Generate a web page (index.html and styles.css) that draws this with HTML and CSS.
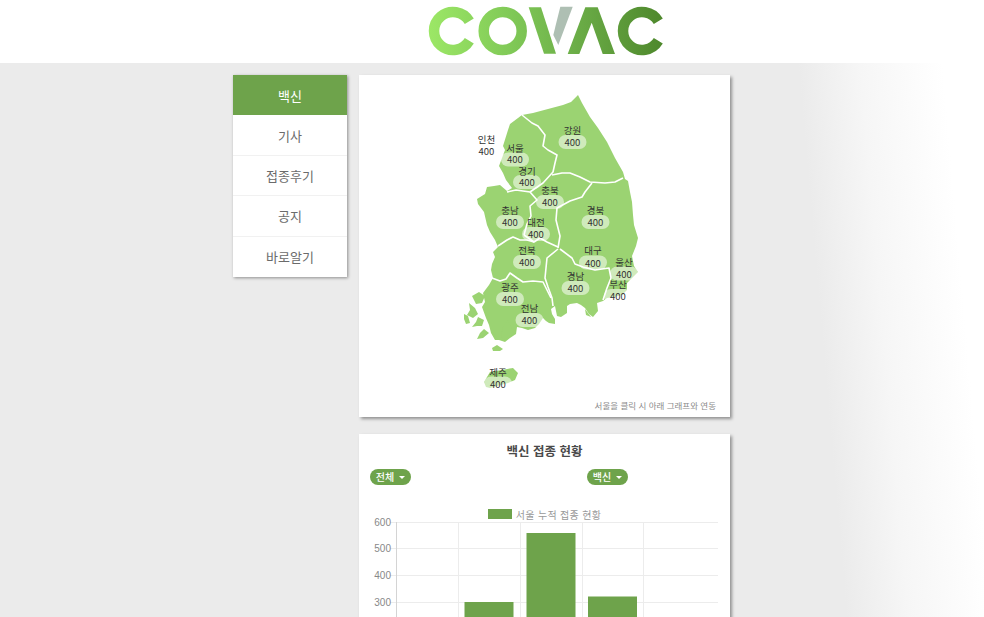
FILE: index.html
```html
<!DOCTYPE html>
<html lang="ko">
<head>
<meta charset="utf-8">
<title>COVAC</title>
<link rel="stylesheet" href="styles.css">
</head>
<body>
<header class="top">
  <div class="logo-col">
    <svg class="logo" viewBox="425 3 238 54" role="img" aria-label="COVAC">
      <defs>
        <linearGradient id="lg" gradientUnits="userSpaceOnUse" x1="428" y1="0" x2="662" y2="0">
          <stop offset="0" stop-color="#9ce766"/>
          <stop offset=".35" stop-color="#80c957"/>
          <stop offset=".62" stop-color="#6cae48"/>
          <stop offset="1" stop-color="#4e882c"/>
        </linearGradient>
      </defs>
      <path class="logo-stroke" d="M468.3 21.2A19 19 0 1 0 468.3 40.8"/>
      <circle class="logo-stroke" cx="501.7" cy="31" r="19"/>
      <polygon class="logo-fill" points="527.7,7.3 540,7.3 555,53.8 543,53.8"/>
      <polygon class="logo-grey" points="559.3,6.7 571.7,6.7 557.3,45 552.3,35"/>
      <polygon class="logo-fill" points="566.7,54 584.3,7.3 596.7,7.3 614,54 601.7,54 590.7,22.7 578.3,54"/>
      <path class="logo-stroke" d="M657.3 21.2A19 19 0 1 0 657.3 40.8"/>
    </svg>
  </div>
</header>
<main class="main">
  <nav class="side">
    <a class="side-item active">백신</a>
    <a class="side-item">기사</a>
    <a class="side-item">접종후기</a>
    <a class="side-item">공지</a>
    <a class="side-item">바로알기</a>
  </nav>
  <div class="content">
    <section class="card map-card">
      <svg class="map" viewBox="359 75 371 342">
        <path class="land" d="M578 95L582 103 590 117 598 128 607 142 615 158 623 172 625 179 628 181 630 192 632 202 633 215 634 225 638 238 636 246 632 256 634 266 638 272 632 278 627 283 627 290 622 295 614 297 607 298 603 301 597 303 598 311 593 317 589 314 585 308 581 305 577 303 570 304 567 306 567 313 561 317 557 316 555 306 551 309 552 314 555 319 555 324 549 323 546 321 543 318 539 324 535 328 528 330 522 328 517 327 516 334 510 338 505 342 499 340 495 340 491 333 489 325 486 318 482 307 485 302 483 293 489 285 493 278 491 270 492 264 495 257 493 252 498 247 495 240 490 232 487 225 484 212 478 204 477 199 485 194 487 187 494 186 500 185 507 191 512 188 506 180 503 173 499 166 502 158 505 150 503 146 508 130 510 124 522 115 533 113 548 109 563 105 571 102Z"/>
        <path class="land" d="M472 296L479 292 485 296 482 303 476 304ZM469 303L475 308 478 314 473 318 467 315 470 310ZM464 314L468 316 470 323 466 324 464 319ZM478 317L484 320 482 326 477 326 472 327 476 322ZM484 329L489 333 483 338 477 339 480 333ZM492 348L497 345 503 349 500 351 493 351ZM508 320L514 334 505 341 501 336 503 327ZM484 382L490 372 513 368 518 373 515 380 508 383 490 388 486 387ZM585 309L591 317 586 315Z"/>
        <polyline class="border" points="522,115 532,123 538,126 545,135 543,146 548,150 557,155 555,163 553,172 543,183 530,192"/>
        <polyline class="border" points="552,175 562,173 570,173 580,177 590,182 605,183 615,182 623,178"/>
        <polyline class="border" points="592,183 585,192 582,197 570,201 557,208 556,220 558,228 560,236 558,248"/>
        <polyline class="border" points="507,192 516,190 530,192 537,200 530,206 531,216 527,224 524,235"/>
        <polyline class="border" points="524,235 534,242 540,238 547,242 558,247"/>
        <polyline class="border" points="498,246 507,240 513,237 520,240 527,240 534,242"/>
        <polyline class="border" points="558,249 547,258 546,268 545,278 548,287 552,298 553,306"/>
        <polyline class="border" points="560,249 572,258 575,264 583,267 595,270 609,268 611,278 607,288 603,300"/>
        <polyline class="border" points="492,278 500,281 506,279 510,273 517,278 523,282 533,281 543,282 547,290 551,298"/>
        <g class="pills">
          <rect x="472.500" y="143.500" width="28" height="14" rx="7"/>
          <rect x="501" y="152.500" width="28" height="14" rx="7"/>
          <rect x="513" y="175" width="28" height="14" rx="7"/>
          <rect x="558.500" y="135" width="28" height="14" rx="7"/>
          <rect x="536" y="195" width="28" height="14" rx="7"/>
          <rect x="496" y="215" width="28" height="14" rx="7"/>
          <rect x="522" y="227" width="28" height="14" rx="7"/>
          <rect x="581.500" y="215" width="28" height="14" rx="7"/>
          <rect x="513" y="255" width="28" height="14" rx="7"/>
          <rect x="579" y="255.500" width="28" height="14" rx="7"/>
          <rect x="610" y="266.500" width="28" height="14" rx="7"/>
          <rect x="561.500" y="281" width="28" height="14" rx="7"/>
          <rect x="604" y="289" width="28" height="14" rx="7"/>
          <rect x="496" y="292" width="28" height="14" rx="7"/>
          <rect x="515.500" y="313" width="28" height="14" rx="7"/>
          <rect x="484" y="376.500" width="28" height="14" rx="7"/>
        </g>
        <g class="labels">
          <text x="486.500" y="143">인천</text><text x="486.500" y="155">400</text>
          <text x="515" y="151.500">서울</text><text x="515" y="163">400</text>
          <text x="527" y="174.500">경기</text><text x="527" y="186">400</text>
          <text x="572.500" y="134">강원</text><text x="572.500" y="146">400</text>
          <text x="550" y="194">충북</text><text x="550" y="206">400</text>
          <text x="510" y="214">충남</text><text x="510" y="226">400</text>
          <text x="536" y="225.500">대전</text><text x="536" y="238">400</text>
          <text x="595.500" y="214">경북</text><text x="595.500" y="226">400</text>
          <text x="527" y="254">전북</text><text x="527" y="266">400</text>
          <text x="593" y="253.500">대구</text><text x="593" y="267">400</text>
          <text x="624" y="265.500">울산</text><text x="624" y="278">400</text>
          <text x="575.500" y="280">경남</text><text x="575.500" y="292">400</text>
          <text x="618" y="288">부산</text><text x="618" y="300">400</text>
          <text x="510" y="291">광주</text><text x="510" y="303">400</text>
          <text x="529.500" y="312">전남</text><text x="529.500" y="324">400</text>
          <text x="498" y="375.500">제주</text><text x="498" y="388">400</text>
        </g>
      </svg>
      <p class="map-note">서울을 클릭 시 아래 그래프와 연동</p>
    </section>
    <section class="card chart-card">
      <h2 class="chart-title">백신 접종 현황</h2>
      <div class="filters">
        <button class="pill">전체<span class="caret"></span></button>
        <button class="pill">백신<span class="caret"></span></button>
      </div>
      <div class="legend"><span class="swatch"></span><span class="legend-text">서울 누적 접종 현황</span></div>
      <svg class="chart" viewBox="359 518 371 240">
        <g class="grid">
          <line x1="390" y1="523.500" x2="718" y2="523.500"/>
          <line x1="390" y1="549.500" x2="718" y2="549.500"/>
          <line x1="390" y1="576.500" x2="718" y2="576.500"/>
          <line x1="390" y1="603.500" x2="718" y2="603.500"/>
          <line x1="390" y1="629.500" x2="718" y2="629.500"/>
          <line x1="390" y1="656.500" x2="718" y2="656.500"/>
          <line x1="458.500" y1="523" x2="458.500" y2="690"/>
          <line x1="520.500" y1="523" x2="520.500" y2="690"/>
          <line x1="582.500" y1="523" x2="582.500" y2="690"/>
          <line x1="643.500" y1="523" x2="643.500" y2="690"/>
          <line class="axis" x1="396.500" y1="523" x2="396.500" y2="690"/>
        </g>
        <g class="bars">
          <rect x="464.500" y="603" width="49" height="87"/>
          <rect x="526.500" y="534" width="49" height="156"/>
          <rect x="588" y="597.500" width="49" height="92.500"/>
        </g>
        <g class="ticks">
          <text x="391" y="527">600</text>
          <text x="391" y="553">500</text>
          <text x="391" y="580">400</text>
          <text x="391" y="607">300</text>
          <text x="391" y="633">200</text>
          <text x="391" y="660">100</text>
        </g>
      </svg>
    </section>
  </div>
</main>
</body>
</html>
```
FILE: styles.css
```css
* { box-sizing: border-box; }
html, body { height: 100%; margin: 0; overflow: hidden; }
body {
  display: flex;
  flex-direction: column;
  font-family: "Noto Sans CJK KR", "Noto Sans", sans-serif;
  background: #fff;
}
.top { height: 63px; flex: none; background: #fff; padding-left: 359px; }
.logo-col { width: 371px; display: flex; justify-content: center; }
.logo { width: 238px; height: 54px; margin-top: 3px; display: block; }
.logo-stroke { fill: none; stroke: url(#lg); stroke-width: 10.5; }
.logo-fill { fill: url(#lg); }
.logo-grey { fill: #aebfb3; }

.main {
  flex: 1;
  min-height: 0;
  display: flex;
  align-items: flex-start;
  gap: 12px;
  padding: 12px 0 0 233px;
  background: linear-gradient(85deg, #ebebeb 0, #ebebeb 82%, #f6f6f6 88%, #fff 96%);
}
.side {
  width: 114px;
  flex: none;
  background: #fff;
  box-shadow: 1px 1px 3px rgba(0, 0, 0, .4);
  display: flex;
  flex-direction: column;
}
.side-item {
  height: 40.4px;
  display: flex;
  align-items: center;
  justify-content: center;
  font-size: 13px;
  color: #6b6b6b;
  border-bottom: 1px solid #f1f1f1;
}
.side-item:last-child { border-bottom: 0; }
.side-item.active { background: #6ea34b; color: #fff; border-bottom: 0; }

.content { width: 371px; flex: none; display: flex; flex-direction: column; gap: 17px; }
.card { background: #fff; box-shadow: 2px 2px 3px rgba(0, 0, 0, .38); position: relative; }
.map-card { height: 342px; }
.map { display: block; width: 371px; height: 342px; }
.land { fill: #9bd372; }
.border { fill: none; stroke: #fff; stroke-width: 1.6; stroke-linejoin: round; }
.pills rect { fill: #fff; fill-opacity: .52; }
.labels text {
  font-size: 9.5px;
  fill: #333;
  text-anchor: middle;
}
.map-note {
  position: absolute;
  right: 14px;
  bottom: 6px;
  margin: 0;
  font-size: 8.500px;
  color: #8a8a8a;
}
.chart-card { height: 330px; padding-top: 8px; }
.chart-title {
  margin: 0;
  text-align: center;
  font-size: 12.500px;
  line-height: 18px;
  font-weight: 700;
  color: #4a4a4a;
}
.filters {
  display: flex;
  gap: 176px;
  padding: 9px 0 0 11px;
}
.pill {
  width: 41px;
  height: 16px;
  padding: 0;
  border: 0;
  border-radius: 8px;
  background: #6ea34b;
  color: #fff;
  font: 500 10px/16px "Noto Sans CJK KR", sans-serif;
  display: flex;
  align-items: center;
  justify-content: center;
  gap: 5px;
}
.caret {
  width: 0;
  height: 0;
  border-left: 3px solid transparent;
  border-right: 3px solid transparent;
  border-top: 3px solid #fff;
}
.legend {
  display: flex;
  align-items: center;
  justify-content: center;
  gap: 4px;
  margin-top: 22px;
  height: 14px;
}
.swatch { width: 24px; height: 10px; background: #6ea34b; }
.legend-text { font-size: 10px; color: #999; letter-spacing: .3px; }
.chart { display: block; width: 371px; height: 240px; margin-top: -4px; }
.grid line { stroke: #ececec; stroke-width: 1; }
.grid .axis { stroke: #d4d4d4; }
.bars rect { fill: #6ea34b; }
.ticks text { font: 10px "Liberation Sans", sans-serif; fill: #888; text-anchor: end; }
```
